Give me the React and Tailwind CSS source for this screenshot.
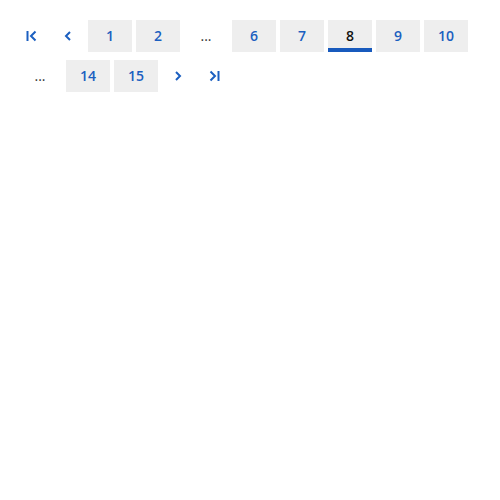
import React from 'react';

const blue = 'text-[#1b5fc0]';

const FirstIcon = () => (
  <svg width="12" height="12" viewBox="0 0 12 12" fill="none" stroke="currentColor" strokeWidth="2">
    <path d="M1.5 1v10" />
    <path d="M9.5 1.5 5 6l4.5 4.5" />
  </svg>
);
const PrevIcon = () => (
  <svg width="12" height="12" viewBox="0 0 12 12" fill="none" stroke="currentColor" strokeWidth="2">
    <path d="M8 2 4 6l4 4" />
  </svg>
);
const NextIcon = () => (
  <svg width="12" height="12" viewBox="0 0 12 12" fill="none" stroke="currentColor" strokeWidth="2">
    <path d="M4 2l4 4-4 4" />
  </svg>
);
const LastIcon = () => (
  <svg width="12" height="12" viewBox="0 0 12 12" fill="none" stroke="currentColor" strokeWidth="2">
    <path d="M10.5 1v10" />
    <path d="M2.5 1.5 7 6l-4.5 4.5" />
  </svg>
);

const items = [
  { t: 'icon', el: <FirstIcon />, first: true },
  { t: 'icon', el: <PrevIcon /> },
  { t: 'page', n: 1 },
  { t: 'page', n: 2 },
  { t: 'dots' },
  { t: 'page', n: 6 },
  { t: 'page', n: 7 },
  { t: 'page', n: 8, current: true },
  { t: 'page', n: 9 },
  { t: 'page', n: 10 },
  { t: 'dots' },
  { t: 'page', n: 14 },
  { t: 'page', n: 15 },
  { t: 'icon', el: <NextIcon /> },
  { t: 'icon', el: <LastIcon /> },
];

const App = () => {
  return (
    <div className="w-[500px] h-[500px] bg-white" style={{ fontFamily: '"Open Sans", "Noto Sans", sans-serif' }}>
      <nav className="flex flex-wrap gap-x-1 gap-y-2 pt-5 pl-[18px] pr-4">
        {items.map((it, i) => {
          if (it.t === 'icon') {
            return (
              <button
                key={i}
                className={`h-8 flex items-center ${it.first ? 'w-[30px] justify-start pl-2' : 'w-8 justify-center'} ${blue}`}
              >
                {it.el}
              </button>
            );
          }
          if (it.t === 'dots') {
            return (
              <span key={i} className="w-11 h-8 flex items-center justify-center text-sm text-[#333]">
                ...
              </span>
            );
          }
          return (
            <button
              key={i}
              className={`w-11 h-8 flex items-center justify-center text-sm font-semibold bg-[#eeeeee] ${
                it.current ? 'text-[#111] font-normal border-b-4 border-[#185abd] pt-1' : blue
              }`}
            >
              {it.n}
            </button>
          );
        })}
      </nav>
    </div>
  );
};

export default App;
